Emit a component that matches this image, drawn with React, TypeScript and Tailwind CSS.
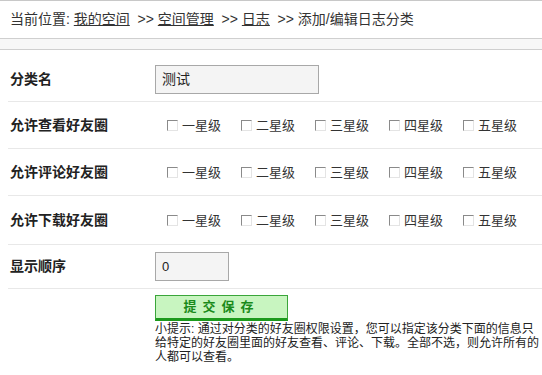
import React from "react";

const font = { fontFamily: '"Liberation Sans", "Noto Sans CJK SC", sans-serif' };

function Box() {
  return (
    <span className="inline-block w-[11px] h-[11px] border border-t-[#8a8a8a] border-l-[#8a8a8a] border-b-[#e4e4e4] border-r-[#e4e4e4] bg-white mr-[4px] shrink-0" />
  );
}

const levels = ["一星级", "二星级", "三星级", "四星级", "五星级"];

function Stars() {
  return (
    <div className="flex pl-[12px]">
      {levels.map((l) => (
        <div key={l} className="w-[74px] flex items-center text-[13px] text-[#333] leading-none">
          <Box />
          <span>{l}</span>
        </div>
      ))}
    </div>
  );
}

function Label({ children }: { children: React.ReactNode }) {
  return <div className="w-[155px] pl-[10px] font-bold text-[14px] text-[#222]">{children}</div>;
}

export default function App() {
  return (
    <div style={font} className="w-[542px] h-[375px] bg-white overflow-hidden text-[#222]">
      <div className="border-t border-[#c8c8c8] h-[38px] flex items-center pl-[10px] text-[14px] text-[#333]">
        <span>当前位置:&nbsp;</span>
        <span className="underline">我的空间</span>
        <span>&nbsp;&nbsp;&gt;&gt;&nbsp;</span>
        <span className="underline">空间管理</span>
        <span>&nbsp;&nbsp;&gt;&gt;&nbsp;</span>
        <span className="underline">日志</span>
        <span>&nbsp;&nbsp;&gt;&gt;&nbsp;添加/编辑日志分类</span>
      </div>
      <div className="h-[12px] border-t border-b border-[#cfcfcf] bg-[#f7f7f7]" />
      <div className="ml-[8px] h-[52px] flex items-center border-b border-[#e8e8e8] pt-[8px]">
        <div className="-ml-[8px]"><Label>分类名</Label></div>
        <div className="w-[164px] h-[29px] border border-[#a8a8a8] bg-[#f4f4f4] flex items-center pl-[6px] text-[14px] text-[#222]">测试</div>
      </div>
      {["允许查看好友圈", "允许评论好友圈", "允许下载好友圈"].map((t, i) => (
        <div key={t} className={`ml-[8px] flex items-center border-b border-[#e8e8e8] ${i === 2 ? "h-[49px]" : "h-[47px]"}`}>
          <div className="-ml-[8px]"><Label>{t}</Label></div>
          <Stars />
        </div>
      ))}
      <div className="ml-[8px] h-[44px] flex items-center border-b border-[#e8e8e8]">
        <div className="-ml-[8px]"><Label>显示顺序</Label></div>
        <div className="w-[74px] h-[29px] border border-[#a8a8a8] bg-[#f4f4f4] flex items-center pl-[6px] text-[13px] text-[#222]">0</div>
      </div>
      <div className="pl-[155px] pt-[6px]">
        <div className="w-[133px] h-[26px] border border-[#3aa53a] border-b-[3px] border-b-[#1c9a1c] bg-[#c8f5c0] flex items-center justify-center text-[13px] font-bold text-[#1a8a1a] tracking-[6px]">
          提交保存
        </div>
        <div className="w-[387px] text-[12px] leading-[14px] text-[#222] pt-[1px]">
          小提示: 通过对分类的好友圈权限设置，您可以指定该分类下面的信息只给特定的好友圈里面的好友查看、评论、下载。全部不选，则允许所有的人都可以查看。
        </div>
      </div>
    </div>
  );
}
